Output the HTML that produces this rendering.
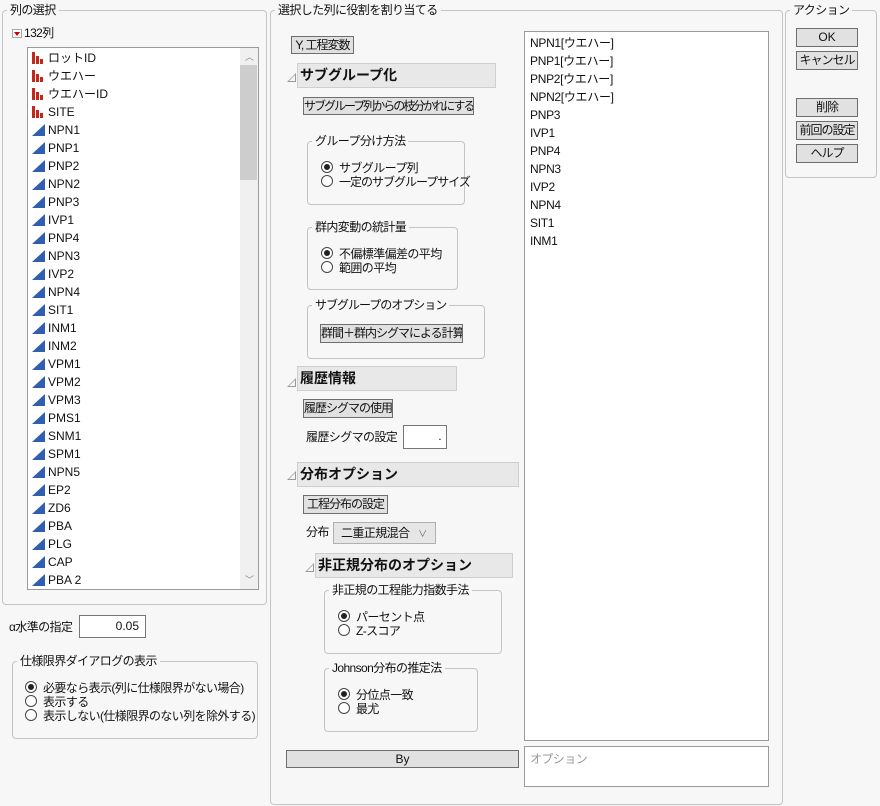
<!DOCTYPE html>
<html><head><meta charset="utf-8">
<style>
*{box-sizing:border-box;margin:0;padding:0}
body{width:880px;height:806px;background:#f7f7f7;font-family:"Liberation Sans","Noto Sans CJK JP",sans-serif;font-size:12px;letter-spacing:-0.6px;color:#111;position:relative;overflow:hidden}
.a{position:absolute;white-space:nowrap}
.gb{position:absolute;border:1px solid #c4c4c4;border-radius:4px}
.lg{position:absolute;background:#f7f7f7;padding:0 3px;line-height:14px;white-space:nowrap}
.btn{position:absolute;background:#e1e1e1;border:1px solid #6e6e6e;text-align:center;line-height:16px;white-space:nowrap;letter-spacing:-1px;overflow:hidden}
.hd{position:absolute;background:#e8e8e8;border:1px solid #cfcfcf;font-weight:bold;font-size:14px;line-height:22px;padding-left:2px;letter-spacing:0}
.tri{position:absolute;width:0;height:0;border-left:9px solid transparent;border-bottom:9px solid #999}
.tri:after{content:"";position:absolute;left:-7px;top:2px;border-left:6px solid transparent;border-bottom:6px solid #f7f7f7}
.rb{position:absolute;width:12px;height:12px;border:1px solid #444;border-radius:50%;background:#fff}
.rb.on:after{content:"";position:absolute;left:2px;top:2px;width:6px;height:6px;border-radius:50%;background:#222}
.row{position:absolute;left:2px;height:18px;line-height:18px;padding-left:18px;letter-spacing:0}
.bar{position:absolute;left:2px;top:3px;width:12px;height:12px}
.tr{position:absolute;left:2px;top:3px;width:13px;height:12px}
</style></head><body>

<div class="gb" style="left:2px;top:10px;width:265px;height:595px"></div>
<div class="lg" style="left:7px;top:3px">列の選択</div>
<div class="a" style="left:12px;top:29px;width:10px;height:9px;background:#fff;border:1px solid #aaa"></div>
<div class="a" style="left:14px;top:32px;width:0;height:0;border-left:3px solid transparent;border-right:3px solid transparent;border-top:4px solid #c00"></div>
<div class="a" style="left:24px;top:26px;line-height:14px">132列</div>
<div class="a" style="left:27px;top:47px;width:232px;height:543px;background:#fff;border:1px solid #9a9a9a;overflow:hidden">
<div class="a" style="left:212px;top:0;width:18px;height:541px;background:#f0f0f0"></div>
<div class="a" style="left:212px;top:17px;width:17px;height:115px;background:#cdcdcd"></div>
<div class="a" style="left:217px;top:2px;font-size:9px;color:#888">︿</div>
<div class="a" style="left:217px;top:525px;font-size:9px;color:#888">﹀</div>
<div id="lst"></div>
</div>

<div class="a" style="left:9px;top:618px">α水準の指定</div>
<div class="a" style="left:79px;top:615px;width:67px;height:23px;background:#fff;border:1px solid #777;text-align:right;padding-right:6px;line-height:21px;letter-spacing:0">0.05</div>

<div class="gb" style="left:12px;top:661px;width:246px;height:78px"></div>
<div class="lg" style="left:17px;top:654px">仕様限界ダイアログの表示</div>
<div class="rb on" style="left:25px;top:681px"></div><div class="a" style="left:43px;top:679px">必要なら表示(列に仕様限界がない場合)</div>
<div class="rb" style="left:25px;top:695px"></div><div class="a" style="left:43px;top:693px">表示する</div>
<div class="rb" style="left:25px;top:709px"></div><div class="a" style="left:43px;top:707px">表示しない(仕様限界のない列を除外する)</div>

<div class="gb" style="left:270px;top:10px;width:513px;height:795px"></div>
<div class="lg" style="left:275px;top:3px">選択した列に役割を割り当てる</div>
<div class="btn" style="left:291px;top:36px;width:63px;height:18px">Y, 工程変数</div>

<div class="tri" style="left:287px;top:73px"></div>
<div class="hd" style="left:297px;top:63px;width:199px;height:25px">サブグループ化</div>
<div class="btn" style="left:303px;top:97px;width:171px;height:18px;letter-spacing:-2px">サブグループ列からの枝分かれにする</div>

<div class="gb" style="left:307px;top:141px;width:158px;height:64px"></div>
<div class="lg" style="left:312px;top:134px">グループ分け方法</div>
<div class="rb on" style="left:321px;top:161px"></div><div class="a" style="left:339px;top:159px">サブグループ列</div>
<div class="rb" style="left:321px;top:175px"></div><div class="a" style="left:339px;top:173px;letter-spacing:-1px">一定のサブグループサイズ</div>

<div class="gb" style="left:307px;top:227px;width:151px;height:63px"></div>
<div class="lg" style="left:312px;top:220px">群内変動の統計量</div>
<div class="rb on" style="left:321px;top:247px"></div><div class="a" style="left:339px;top:245px">不偏標準偏差の平均</div>
<div class="rb" style="left:321px;top:261px"></div><div class="a" style="left:339px;top:259px">範囲の平均</div>

<div class="gb" style="left:307px;top:305px;width:178px;height:54px"></div>
<div class="lg" style="left:312px;top:298px;letter-spacing:-1px">サブグループのオプション</div>
<div class="btn" style="left:320px;top:324px;width:143px;height:19px">群間＋群内シグマによる計算</div>

<div class="tri" style="left:287px;top:378px"></div>
<div class="hd" style="left:297px;top:366px;width:160px;height:25px">履歴情報</div>
<div class="btn" style="left:303px;top:399px;width:90px;height:19px">履歴シグマの使用</div>
<div class="a" style="left:306px;top:428px">履歴シグマの設定</div>
<div class="a" style="left:403px;top:425px;width:44px;height:24px;background:#fff;border:1px solid #777;text-align:right;padding-right:5px;line-height:20px">.</div>

<div class="tri" style="left:287px;top:471px"></div>
<div class="hd" style="left:297px;top:462px;width:222px;height:25px">分布オプション</div>
<div class="btn" style="left:303px;top:495px;width:85px;height:19px">工程分布の設定</div>
<div class="a" style="left:306px;top:523px">分布</div>
<div class="a" style="left:333px;top:522px;width:103px;height:22px;background:#e6e6e6;border:1px solid #b0b0b0;line-height:20px;padding-left:7px">二重正規混合 <span style="font-size:9px;color:#666;margin-left:6px">∨</span></div>

<div class="tri" style="left:305px;top:563px"></div>
<div class="hd" style="left:315px;top:553px;width:198px;height:25px">非正規分布のオプション</div>

<div class="gb" style="left:324px;top:590px;width:178px;height:64px"></div>
<div class="lg" style="left:329px;top:583px">非正規の工程能力指数手法</div>
<div class="rb on" style="left:338px;top:610px"></div><div class="a" style="left:356px;top:608px">パーセント点</div>
<div class="rb" style="left:338px;top:624px"></div><div class="a" style="left:356px;top:622px">Z-スコア</div>

<div class="gb" style="left:324px;top:668px;width:154px;height:64px"></div>
<div class="lg" style="left:329px;top:661px">Johnson分布の推定法</div>
<div class="rb on" style="left:338px;top:688px"></div><div class="a" style="left:356px;top:686px">分位点一致</div>
<div class="rb" style="left:338px;top:702px"></div><div class="a" style="left:356px;top:700px">最尤</div>

<div class="btn" style="left:286px;top:750px;width:233px;height:18px;letter-spacing:0">By</div>

<div class="a" style="left:524px;top:31px;width:245px;height:710px;background:#fff;border:1px solid #9a9a9a;line-height:18px;padding:2px 0 0 5px;letter-spacing:-0.3px">NPN1[ウエハー]<br>PNP1[ウエハー]<br>PNP2[ウエハー]<br>NPN2[ウエハー]<br>PNP3<br>IVP1<br>PNP4<br>NPN3<br>IVP2<br>NPN4<br>SIT1<br>INM1</div>
<div class="a" style="left:524px;top:746px;width:245px;height:41px;background:#fff;border:1px solid #9a9a9a;color:#999;padding:3px 0 0 5px">オプション</div>

<div class="gb" style="left:785px;top:10px;width:92px;height:168px"></div>
<div class="lg" style="left:790px;top:3px">アクション</div>
<div class="btn" style="left:796px;top:28px;width:62px;height:19px;letter-spacing:0">OK</div>
<div class="btn" style="left:796px;top:51px;width:62px;height:19px">キャンセル</div>
<div class="btn" style="left:796px;top:98px;width:62px;height:19px">削除</div>
<div class="btn" style="left:796px;top:121px;width:62px;height:19px">前回の設定</div>
<div class="btn" style="left:796px;top:144px;width:62px;height:19px">ヘルプ</div>

<script>
var items=["ロットID","ウエハー","ウエハーID","SITE","NPN1","PNP1","PNP2","NPN2","PNP3","IVP1","PNP4","NPN3","IVP2","NPN4","SIT1","INM1","INM2","VPM1","VPM2","VPM3","PMS1","SNM1","SPM1","NPN5","EP2","ZD6","PBA","PLG","CAP","PBA 2"];
var h="";
items.forEach(function(t,i){
 var ic = i<4 ? '<svg class="bar" viewBox="0 0 12 12"><rect x="0" y="0" width="3" height="12" fill="#c0281c"/><rect x="4" y="4" width="3" height="8" fill="#c0281c"/><rect x="8" y="7" width="3" height="5" fill="#c0281c"/></svg>'
 : '<svg class="tr" viewBox="0 0 13 12"><polygon points="0,12 13,0 13,12" fill="#2f5fae"/></svg>';
 h+='<div class="row" style="top:'+(1+i*18)+'px">'+ic+t+'</div>';
});
document.getElementById("lst").innerHTML=h;
</script>
</body></html>
